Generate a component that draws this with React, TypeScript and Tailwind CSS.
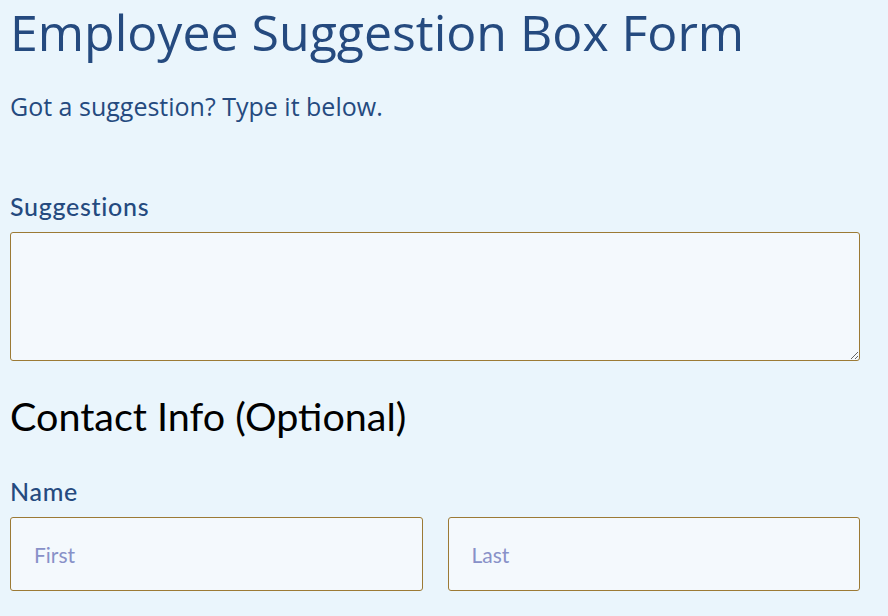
import React from "react";

export default function App() {
  return (
    <div className="min-h-[616px] w-full bg-[#eaf5fc] px-[10px] flex flex-col">
      {/* Title */}
      <h1 className="text-[50px] leading-[64px] text-[#254a7f] whitespace-nowrap font-['Open_Sans',sans-serif]">
        Employee Suggestion Box Form
      </h1>
      <p className="mt-[25px] text-[25px] leading-[34px] text-[#254a7f] font-['Open_Sans',sans-serif]">
        Got a suggestion? Type it below.
      </p>

      <form className="flex flex-col">
        {/* Suggestions */}
        <label className="mt-[68px] text-[25px] leading-[30px] font-medium tracking-[0.7px] text-[#254a7f] font-['Lato','Noto_Sans',sans-serif]">
          Suggestions
        </label>
        <textarea className="mt-[11px] block w-[850px] h-[129px] rounded-[3px] border border-[#9c7a35] bg-[#f4f9fd] outline-none" />

        {/* Contact */}
        <h2 className="mt-[31px] text-[39.5px] leading-[48px] text-black font-['Lato','Noto_Sans',sans-serif]">
          Contact Info (Optional)
        </h2>

        <label className="mt-[36px] text-[25px] leading-[30px] font-medium tracking-[0.7px] text-[#254a7f] font-['Lato','Noto_Sans',sans-serif]">
          Name
        </label>
        <div className="mt-[11px] flex gap-[25px] w-[850px]">
          <input
            placeholder="First"
            className="flex-1 min-w-0 h-[74px] rounded-[3px] border border-[#9c7a35] bg-[#f4f9fd] px-[23px] text-[21px] placeholder:text-[#8891c8] outline-none font-['Lato','Noto_Sans',sans-serif]"
          />
          <input
            placeholder="Last"
            className="flex-1 min-w-0 h-[74px] rounded-[3px] border border-[#9c7a35] bg-[#f4f9fd] px-[23px] text-[21px] placeholder:text-[#8891c8] outline-none font-['Lato','Noto_Sans',sans-serif]"
          />
        </div>
      </form>
    </div>
  );
}
